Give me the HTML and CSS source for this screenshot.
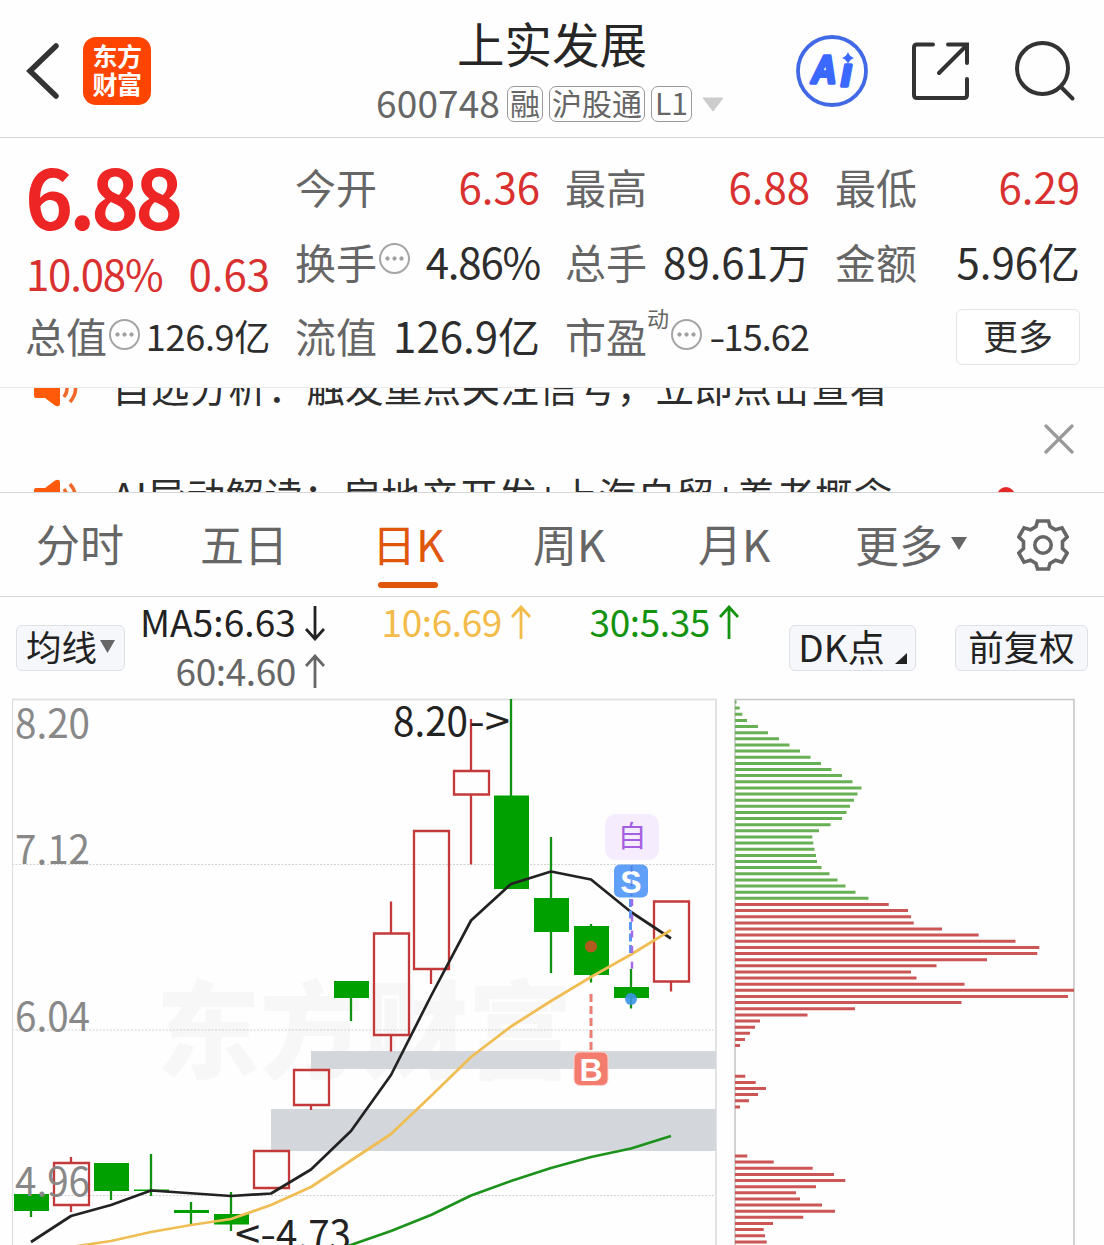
FILE: index.html
```html
<!DOCTYPE html>
<html lang="zh-CN">
<head>
<meta charset="utf-8">
<title>上实发展 600748</title>
<link rel="stylesheet" href="styles.css">
</head>
<body>
<header class="topbar">
  <div class="side left">
    <svg class="back" width="34" height="56" viewBox="0 0 34 56"><path d="M31 3 L5 28 L31 53" fill="none" stroke="#333" stroke-width="5.5" stroke-linecap="round"/></svg>
    <div class="logo"><span>东方</span><span>财富</span></div>
  </div>
  <div class="stock">
    <h1>上实发展</h1>
    <div class="sub">
      <span class="code">600748</span><span class="tag">融</span><span class="tag">沪股通</span><span class="tag level">L1</span>
      <svg class="drop" width="22" height="15" viewBox="0 0 22 15"><path d="M1 1H21L11 14Z" fill="#ccc" stroke="#ccc"/></svg>
    </div>
  </div>
  <div class="side right">
    <svg width="72" height="72" viewBox="796 34 72 72">
      <circle cx="832" cy="70" r="34" fill="none" stroke="#4169e6" stroke-width="3.8"/>
      <g class="ai"><text x="811.5" y="81.5" textLength="25" lengthAdjust="spacingAndGlyphs">A</text><text x="841" y="84.5">ı</text></g>
      <path d="M848 51Q849.500 55.500 854 57Q849.500 58.500 848 63Q846.500 58.500 842 57Q846.500 55.500 848 51Z" fill="#3b68ff"/>
    </svg>
    <svg class="share" width="60" height="60" viewBox="910 40 60 60"><g fill="none" stroke="#333" stroke-width="4" stroke-linecap="round"><path d="M933 43.500H917Q914 43.500 914 46.500V94Q914 97 917 97H964Q967 97 967 94V78"/><path d="M948 43.500H967V62M966 45L939 72"/></g></svg>
    <svg class="search" width="62" height="62" viewBox="1014 39 62 62"><g fill="none" stroke="#333" stroke-width="4" stroke-linecap="round"><circle cx="1042.500" cy="67.500" r="25.500"/><path d="M1061 86L1072.500 97.500"/></g></svg>
  </div>
</header>

<section class="quote">
  <div class="price">6.88</div>
  <div class="cell"><span>今开</span><b class="red">6.36</b></div>
  <div class="cell"><span>最高</span><b class="red">6.88</b></div>
  <div class="cell"><span>最低</span><b class="red">6.29</b></div>
  <div class="cell change"><b class="red pct">10.08%</b><b class="red">0.63</b></div>
  <div class="cell"><span>换手</span><i class="info"></i><b class="pct">4.86%</b></div>
  <div class="cell"><span>总手</span><b>89.61万</b></div>
  <div class="cell"><span>金额</span><b>5.96亿</b></div>
  <div class="cell"><span>总值</span><i class="info low"></i><b class="small">126.9亿</b></div>
  <div class="cell"><span>流值</span><b>126.9亿</b></div>
  <div class="cell"><span>市盈</span><sup>动</sup><i class="info low"></i><b class="small pe"><em>-</em>15.62</b></div>
  <div class="cell end"><button class="more">更多</button></div>
</section>

<section class="news">
  <div class="ticker">
    <div class="item"><svg class="horn" width="46" height="36" viewBox="0 0 46 36"><path d="M3 9H12L22 1.500Q27 -1 27 4V32Q27 37 22 34.500L12 27H3Q1 27 1 25V11Q1 9 3 9Z" fill="#ff5a0a"/><path d="M31 10Q37 18 31 26M37 5Q48 18 37 31" fill="none" stroke="#f26a2a" stroke-width="3.500"/></svg><span>自选分析：触发重点关注信号，立即点击查看</span></div>
    <div class="item second"><svg class="horn" width="46" height="36" viewBox="0 0 46 36"><path d="M3 9H12L22 1.500Q27 -1 27 4V32Q27 37 22 34.500L12 27H3Q1 27 1 25V11Q1 9 3 9Z" fill="#ff5a0a"/><path d="M31 10Q37 18 31 26M37 5Q48 18 37 31" fill="none" stroke="#f26a2a" stroke-width="3.500"/></svg><span>AI异动解读：房地产开发+上海自贸+养老概念</span><i class="dot"></i></div>
  </div>
  <svg class="close" width="30" height="30" viewBox="0 0 30 30"><path d="M2 2L28 28M28 2L2 28" stroke="#999" stroke-width="3.200" stroke-linecap="round"/></svg>
</section>

<nav class="tabs">
  <span>分时</span><span>五日</span><span class="active">日K</span><span>周K</span><span>月K</span>
  <span class="tabmore">更多<svg width="16" height="13" viewBox="0 0 16 13"><path d="M0 0H16L8 13Z" fill="#666"/></svg></span>
  <svg class="gear" width="52" height="54" viewBox="-26 -27 52 54"><path d="M-5.500 -24H5.500L7 -18.500L12.500 -15.300L19 -17.200L24.200 -8L19.500 -3.500V3.500L24.200 8L19 17.200L12.500 15.300L7 18.500L5.500 24H-5.500L-7 18.500L-12.500 15.300L-19 17.200L-24.200 8L-19.500 3.500V-3.500L-24.200 -8L-19 -17.200L-12.500 -15.300L-7 -18.500Z" fill="none" stroke="#666" stroke-width="3.600"/><circle r="8.200" fill="none" stroke="#666" stroke-width="3.600"/></svg>
</nav>

<section class="indicators">
  <button class="chip avg">均线<svg width="15" height="13" viewBox="0 0 15 13"><path d="M0 0H15L7.500 13Z" fill="#666"/></svg></button>
  <div class="mas">
    <span class="ma5">MA5:6.63<svg class="arrow" width="20" height="36" viewBox="0 0 20 36"><path d="M10 1V33M1 24L10 34L19 24"/></svg></span>
    <span class="ma10">10:6.69<svg class="arrow" width="20" height="36" viewBox="0 0 20 36"><path d="M10 34V3M1 12L10 2L19 12"/></svg></span>
    <span class="ma30">30:5.35<svg class="arrow" width="20" height="36" viewBox="0 0 20 36"><path d="M10 34V3M1 12L10 2L19 12"/></svg></span>
    <span class="ma60">60:4.60<svg class="arrow" width="20" height="36" viewBox="0 0 20 36"><path d="M10 34V3M1 12L10 2L19 12"/></svg></span>
  </div>
  <button class="chip dk">DK点<svg width="12" height="11" viewBox="0 0 12 11"><path d="M12 0V11H0Z" fill="#222"/></svg></button>
  <button class="chip fq">前复权</button>
</section>

<main class="charts">
<svg class="kline" width="724" height="547" viewBox="0 698 724 547">
  <text class="mark" x="156" y="1070" textLength="416" lengthAdjust="spacingAndGlyphs">东方财富</text>
  <g class="grid"><path d="M12 864.500H716M12 1030H716M12 1195.500H716"/></g>
  <path d="M12.500 1245V699.500" stroke="#ddd" fill="none"/><path d="M12 699.500H716V1245" stroke="#e2e2e2" stroke-width="2" fill="none"/>
  <path d="M311 1051H716V1069H311ZM271 1109H716V1151H271Z" fill="#d3d6db"/>
  <g class="down">
    <path class="w" d="M31 1194V1217M111 1163V1200M151 1154V1196M191 1202V1224M231 1192V1231M351 981V1021M511 699V889M551 837V973M591 924V982.500M631 969V1008.500"/>
    <path class="b" d="M14 1194h35v17h-35ZM94 1163h35v28h-35ZM134 1189.500h35v1.500h-35ZM174 1210h35v3h-35ZM214 1214h35v10.500h-35ZM334 981h35v17h-35ZM494 795.500h35v93.500h-35ZM534 898h35v34h-35ZM574 926h35v49h-35ZM614 987h35v11h-35Z"/>
  </g>
  <g class="up">
    <path d="M71 1157V1162M71 1206V1212M311 1106V1110M391 901.500V933M391 1035V1051.500M431 969V984M471 719V771M471 794.500V864.500M671 982V991.500"/>
    <path class="box" d="M54 1163h35v42h-35ZM254 1151h35v37h-35ZM294 1070h35v35h-35ZM374 933.500h35v101.500h-35ZM414 831h35v138h-35ZM454 771h35v23.500h-35ZM654 901.500h35v80h-35Z"/>
  </g>
  <g class="axis">
    <text x="15" y="737.500" textLength="75" lengthAdjust="spacingAndGlyphs">8.20</text>
    <text x="15" y="864" textLength="75" lengthAdjust="spacingAndGlyphs">7.12</text>
    <text x="15" y="1030.500" textLength="75" lengthAdjust="spacingAndGlyphs">6.04</text>
    <text x="15" y="1195.500" textLength="75" lengthAdjust="spacingAndGlyphs">4.96</text>
  </g>
  <g class="peak">
    <text x="393" y="735.500" textLength="75" lengthAdjust="spacingAndGlyphs">8.20</text><text x="469" y="735.500" textLength="41" lengthAdjust="spacingAndGlyphs">-&gt;</text>
    <text x="235" y="1249" textLength="41" lengthAdjust="spacingAndGlyphs">&lt;-</text><text x="276" y="1249" textLength="75" lengthAdjust="spacingAndGlyphs">4.73</text>
  </g>
  <g class="lines">
    <path stroke="#222" d="M31 1242L71 1216L111 1205L151 1190.500L231 1196L271 1193.500L311 1169.500L351 1131L391 1075L431 996L471 920.500L511 884L551 871.500L591 879.500L631 912L671 938.500"/>
    <path stroke="#f0bd55" d="M71 1247L111 1241L151 1232L191 1225L231 1219L271 1205L311 1187L351 1160.500L391 1134L431 1096L471 1057L511 1026.500L551 1001L591 977L631 954.500L671 930"/>
    <path stroke="#1c921c" d="M345 1247L391 1231L431 1215L471 1195.500L511 1181L551 1168L591 1157L631 1148.500L671 1136"/>
  </g>
  <circle cx="591" cy="946.500" r="6" fill="#b35a20"/><circle cx="631" cy="999" r="6" fill="#3b93e6" opacity=".9"/>
  <path d="M591 994V1052" stroke="#ea7d70" stroke-width="3" stroke-dasharray="8 4"/>
  <path d="M630.500 899V956" stroke="#5b96f2" stroke-width="3" stroke-dasharray="8 3.500"/>
  <path d="M632 899V969" stroke="#a36be6" stroke-width="2.500" stroke-dasharray="7 8.700"/>
  <rect x="605" y="814" width="54" height="46" rx="11" fill="#f5edfe"/><text class="zi" x="632" y="847" text-anchor="middle">自</text>
  <rect x="614" y="864.500" width="34" height="33" rx="6" fill="#61a0f8"/><text class="bs" x="631" y="893" text-anchor="middle">S</text>
  <path d="M631.500 866V896" stroke="#4a6fe0" stroke-width="2" stroke-dasharray="6 8" opacity=".65"/>
  <rect x="574" y="1052" width="34" height="33.500" rx="6" fill="#f47c6e" stroke="#fbd3cd" stroke-width="1"/><text class="bs" x="591" y="1081" text-anchor="middle">B</text>
</svg>
<svg class="volume" width="380" height="547" viewBox="724 698 380 547">
  <path d="M735 1245V699.500H1074V1245" fill="none" stroke="#c8c8c8" stroke-width="1.600"/>
  <path id="chipsAbove" class="bars green"/><path id="chipsBelow" class="bars crimson"/>
</svg>
</main>
<script src="chips.js"></script>
</body>
</html>
```
FILE: styles.css
```css
* { box-sizing: border-box; }
body { margin: 0; width: 1104px; height: 1245px; overflow: hidden; background: #fefefe; color: #2d2d2d; font-family: "Noto Sans CJK SC", "Liberation Sans", sans-serif; }
svg { display: block; flex: none; }
h1, b, i, em, button { font-weight: 400; font-style: normal; margin: 0; }
button { font-family: inherit; color: inherit; padding: 0; }

.topbar { height: 138px; border-bottom: 1px solid #d4d4d4; display: grid; grid-template-columns: 352px 400px 352px; }
.side { display: flex; align-items: center; }
.left { padding: 4px 0 0 25px; gap: 24px; }
.logo { width: 68px; height: 68px; border-radius: 13px; background: #ff4400; color: #fff; font-size: 25px; font-weight: 700; line-height: 28.500px; display: flex; flex-direction: column; align-items: center; padding-top: 4px; letter-spacing: -.5px; }
.stock { display: flex; flex-direction: column; align-items: center; }
.stock h1 { font-size: 47.500px; line-height: 60px; margin-top: 13px; color: #262626; }
.sub { display: flex; align-items: center; height: 38px; margin-top: 12px; color: #666; padding-right: 4px; }
.code { font-size: 37px; line-height: 38px; margin-right: 7px; letter-spacing: .1px; position: relative; top: -2px; }
.tag { border: 1.500px solid #999; border-radius: 7px; height: 36px; line-height: 31px; font-size: 30px; padding: 0 2px; margin-right: 6px; }
.level { padding: 0 3px; }
.drop { margin-left: 4px; }
.right { padding: 4px 0 0 44px; }
.share { margin-left: 42px; }
.search { margin-left: 44px; }
.ai text { font: italic 700 39px "Liberation Sans", sans-serif; fill: #3b68ff; stroke: #3b68ff; stroke-width: 3.500px; stroke-linejoin: round; }

.quote { height: 250px; border-bottom: 1px solid #e8e8e8; padding: 11px 24px 0 25px; display: grid; grid-template-columns: repeat(4, 245px); column-gap: 25px; grid-template-rows: repeat(3, 74.500px); }
.cell { display: flex; align-items: center; font-size: 42px; line-height: 60px; white-space: nowrap; }
.cell span { font-size: 41px; color: #666; }
.cell b { margin-left: auto; letter-spacing: 0; }
.cell .pct { letter-spacing: -1.200px; }
.cell .red { color: #d93030; }
.price { font-size: 82px; line-height: 90px; font-weight: 700; color: #ee2525; letter-spacing: -4.500px; padding-top: 1px; }
.change { justify-content: space-between; padding: 25px 0 0 1px; }
.cell.change b { margin: 0; }
.cell .small { font-size: 36px; letter-spacing: -.3px; }
.cell .pe { letter-spacing: -.9px; padding-right: 1px; }
.pe em { display: inline-block; transform: scaleX(1.3); margin-right: 1px; }
.cell sup { font-size: 22px; line-height: 30px; color: #666; align-self: flex-start; margin-top: 4px; }
.info { width: 31px; height: 31px; border: 2.500px solid #a5a5a5; border-radius: 50%; margin-left: 2px; margin-top: -4px; background: radial-gradient(circle, #a0a0a0 1.800px, transparent 2.400px) center / 7px 7px no-repeat, radial-gradient(circle, #a0a0a0 1.800px, transparent 2.400px) 2.500px center / 7px 7px no-repeat, radial-gradient(circle, #a0a0a0 1.800px, transparent 2.400px) 17px center / 7px 7px no-repeat; }
.info.low { margin-top: -1px; }
.end { justify-content: flex-end; }
.more { width: 124px; height: 56px; border: 1.500px solid #e4e4e4; border-radius: 6px; background: #fff; font-size: 35px; line-height: 46px; padding-bottom: 4px; margin-top: 3px; }

.news { height: 105px; border-bottom: 1.500px solid #d6d6d6; overflow: hidden; display: flex; justify-content: space-between; padding: 0 30px 0 33px; }
.ticker { margin-top: -33px; }
.item { display: flex; align-items: center; height: 60px; font-size: 38.600px; line-height: 60px; white-space: nowrap; letter-spacing: .25px; }
.item.second { margin-top: 49px; letter-spacing: .4px; }
.horn { margin: 8px 33px 0 0; }
.second .horn { margin-top: 6px; }
.dot { width: 18px; height: 18px; border-radius: 50%; background: #e62828; margin-left: 104px; margin-top: 3px; }
.close { margin-top: 36px; }

.tabs { height: 104px; border-bottom: 1.500px solid #d6d6d6; display: grid; grid-template-columns: 164px 172px 161px 165px 157px 162px 52px; padding-left: 36px; align-items: center; font-size: 44px; line-height: 100px; color: #666; }
.tabs > span { height: 104px; }
.active { color: #e0560a; position: relative; }
.active::after { content: ""; position: absolute; left: 6px; top: 89px; width: 60px; height: 6px; border-radius: 3px; background: #e0560a; }
.tabmore { display: flex; align-items: center; gap: 8px; padding-bottom: 3px; }

.indicators { height: 101px; display: grid; grid-template-columns: 109px 648px 127px 133px; padding-left: 16px; column-gap: 0; align-items: start; }
.chip { height: 46px; margin-top: 28px; border: 1.500px solid #dde0e4; border-radius: 6px; background: #f6f7fa; color: #222; font-size: 35.500px; line-height: 38px; padding-bottom: 4px; display: flex; align-items: center; justify-content: center; gap: 3px; }
.dk { margin-left: 16px; width: 127px; gap: 10px; font-size: 37px; }
.dk svg { margin-top: 25px; }
.fq { margin-left: 55px; width: 133px; }
.mas { display: grid; grid-template-columns: 200px 206px 208px; grid-template-rows: 49px 49px; font-size: 37px; line-height: 49px; }
.mas span { display: flex; justify-content: flex-end; align-items: center; gap: 9px; white-space: nowrap; letter-spacing: -.4px; }
.mas .ma5 { letter-spacing: .1px; }
.arrow { fill: none; stroke: currentColor; stroke-width: 2.800; margin-top: 3px; }
.ma5 { color: #222; }
.ma10 { color: #f2bb4a; }
.ma30 { color: #14930f; }
.ma60 { color: #666; }

.charts { display: flex; height: 547px; }
.mark { font-size: 106px; font-weight: 900; fill: #f7f7f7; }
.grid path { stroke: #d2d2d2; stroke-width: 1.200; stroke-dasharray: 2 1.500; }
.w { stroke: #119311; stroke-width: 2.300; }
.b { fill: #00a000; }
.up path { stroke: #c43a3a; stroke-width: 2.300; fill: none; }
.axis text { font-size: 40px; fill: #888; }
.peak text { font-size: 40px; fill: #222; }
.lines path { fill: none; stroke-width: 2.700; stroke-linejoin: round; }
.zi { font-size: 29px; fill: #a45fe0; }
.bs { font: 700 32px "Liberation Sans", sans-serif; fill: #fff; }
.bars { fill: none; stroke-width: 3; }
.green { stroke: #68b055; }
.crimson { stroke: #cc5555; }
```
FILE: chips.js
```js
// Right edge of each price-level bar, listed from the top level down; 0 marks an empty level.
const above = [736.5,739.7,742.3,747,758,768,779,789.5,800,810.5,821,831.5,842,852.5,861.5,857.5,854,850,846.5,842,830.5,819,812.3,813.3,814.5,816,817,821.5,829.5,837.5,845.5,855.5,868.5];
const below = [888.7,908,911,913.7,942,978.7,1015.5,1039.3,1037.3,987,936.5,911,916.5,964.5,1074,1068,961.5,855,807.5,760,755,750,745,740,0,0,0,0,745.3,755.7,766,758,749,740,0,0,0,0,0,0,0,747.3,773.7,812.7,834,845.3,816,796,800,822,835,803.3,773,763.7,765,766.7];
const bars = (edges, first) => edges.map((x, i) => x ? `M735 ${(702 + (first + i) * 6.135).toFixed(1)}H${x}` : "").join("");
document.getElementById("chipsAbove").setAttribute("d", bars(above, 0));
document.getElementById("chipsBelow").setAttribute("d", bars(below, above.length));
```
